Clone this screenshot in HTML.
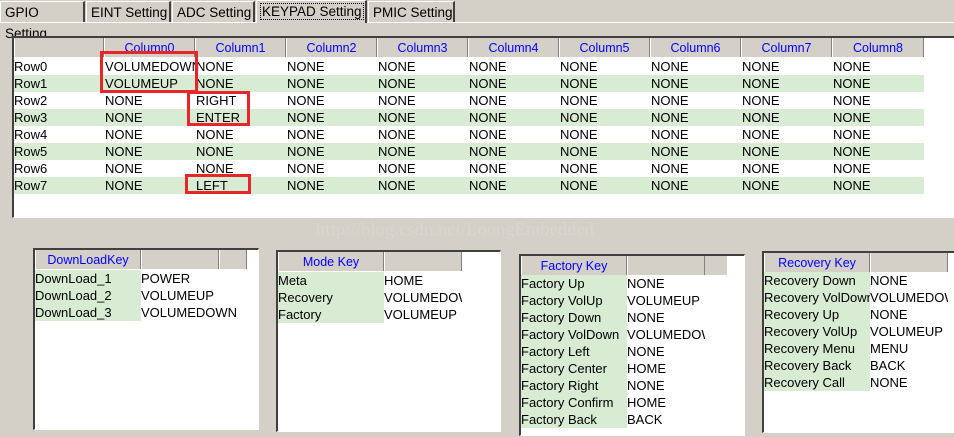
<!DOCTYPE html>
<html><head><meta charset="utf-8"><style>
*{margin:0;padding:0;box-sizing:border-box}
body{width:954px;height:437px;background:#d4d0c8;position:relative;overflow:hidden;font-family:"Liberation Sans",Arial,sans-serif;font-size:13px;color:#000}
.a{position:absolute}
.tab{position:absolute;top:1px;height:21px;border-left:1px solid #fff;border-top:1px solid #fff;border-right:2px solid #404040;font-size:13.5px;line-height:21px;padding-left:4px;color:#000}
.box{position:absolute;background:#fff;border-top:2px solid #404040;border-left:2px solid #404040;border-right:1px solid #fff;border-bottom:1px solid #fff}
.hd{position:absolute;height:19px;background:#d4d0c8;border-right:1px solid #808080;border-left:1px solid #fff;color:#0000ff;text-align:center;line-height:20px;font-size:12.5px}
.r{position:absolute;height:17px;line-height:18px;white-space:nowrap}
.r span{overflow:hidden}
.g{background:#d8ebd3}
.red{position:absolute;border:3px solid #e8262a}
</style></head><body>
<div class="a" style="left:0;top:22px;width:954px;height:1px;background:#fff"></div>
<div class="tab" style="left:0;width:85px">GPIO Setting</div>
<div class="tab" style="left:86px;width:85px">EINT Setting</div>
<div class="tab" style="left:172px;width:83px">ADC Setting</div>
<div class="tab" style="left:256px;top:0;height:23px;width:111px;background:#d4d0c8;border-bottom:none"><span style="outline:1px dotted #000;padding:0 1px">KEYPAD Setting</span></div>
<div class="tab" style="left:368px;width:87px">PMIC Setting</div>

<div class="box" style="left:12px;top:36px;width:950px;height:182px"></div>
<div class="hd" style="left:14px;top:38px;width:90px"></div>
<div class="hd" style="left:104px;top:38px;width:91px">Column0</div>
<div class="hd" style="left:195px;top:38px;width:91px">Column1</div>
<div class="hd" style="left:286px;top:38px;width:91px">Column2</div>
<div class="hd" style="left:377px;top:38px;width:91px">Column3</div>
<div class="hd" style="left:468px;top:38px;width:91px">Column4</div>
<div class="hd" style="left:559px;top:38px;width:91px">Column5</div>
<div class="hd" style="left:650px;top:38px;width:91px">Column6</div>
<div class="hd" style="left:741px;top:38px;width:91px">Column7</div>
<div class="hd" style="left:832px;top:38px;width:92px">Column8</div>

<div class="r" style="left:14px;top:58px;width:910px"><span class="a" style="left:0">Row0</span><span class="a" style="left:91px">VOLUMEDOWN</span><span class="a" style="left:182px;background:#fff">NONE</span><span class="a" style="left:273px">NONE</span><span class="a" style="left:364px">NONE</span><span class="a" style="left:455px">NONE</span><span class="a" style="left:546px">NONE</span><span class="a" style="left:637px">NONE</span><span class="a" style="left:728px">NONE</span><span class="a" style="left:819px">NONE</span></div>
<div class="r g" style="left:14px;top:75px;width:910px"><span class="a" style="left:0">Row1</span><span class="a" style="left:91px">VOLUMEUP</span><span class="a" style="left:182px">NONE</span><span class="a" style="left:273px">NONE</span><span class="a" style="left:364px">NONE</span><span class="a" style="left:455px">NONE</span><span class="a" style="left:546px">NONE</span><span class="a" style="left:637px">NONE</span><span class="a" style="left:728px">NONE</span><span class="a" style="left:819px">NONE</span></div>
<div class="r" style="left:14px;top:92px;width:910px"><span class="a" style="left:0">Row2</span><span class="a" style="left:91px">NONE</span><span class="a" style="left:182px">RIGHT</span><span class="a" style="left:273px">NONE</span><span class="a" style="left:364px">NONE</span><span class="a" style="left:455px">NONE</span><span class="a" style="left:546px">NONE</span><span class="a" style="left:637px">NONE</span><span class="a" style="left:728px">NONE</span><span class="a" style="left:819px">NONE</span></div>
<div class="r g" style="left:14px;top:109px;width:910px"><span class="a" style="left:0">Row3</span><span class="a" style="left:91px">NONE</span><span class="a" style="left:182px">ENTER</span><span class="a" style="left:273px">NONE</span><span class="a" style="left:364px">NONE</span><span class="a" style="left:455px">NONE</span><span class="a" style="left:546px">NONE</span><span class="a" style="left:637px">NONE</span><span class="a" style="left:728px">NONE</span><span class="a" style="left:819px">NONE</span></div>
<div class="r" style="left:14px;top:126px;width:910px"><span class="a" style="left:0">Row4</span><span class="a" style="left:91px">NONE</span><span class="a" style="left:182px">NONE</span><span class="a" style="left:273px">NONE</span><span class="a" style="left:364px">NONE</span><span class="a" style="left:455px">NONE</span><span class="a" style="left:546px">NONE</span><span class="a" style="left:637px">NONE</span><span class="a" style="left:728px">NONE</span><span class="a" style="left:819px">NONE</span></div>
<div class="r g" style="left:14px;top:143px;width:910px"><span class="a" style="left:0">Row5</span><span class="a" style="left:91px">NONE</span><span class="a" style="left:182px">NONE</span><span class="a" style="left:273px">NONE</span><span class="a" style="left:364px">NONE</span><span class="a" style="left:455px">NONE</span><span class="a" style="left:546px">NONE</span><span class="a" style="left:637px">NONE</span><span class="a" style="left:728px">NONE</span><span class="a" style="left:819px">NONE</span></div>
<div class="r" style="left:14px;top:160px;width:910px"><span class="a" style="left:0">Row6</span><span class="a" style="left:91px">NONE</span><span class="a" style="left:182px">NONE</span><span class="a" style="left:273px">NONE</span><span class="a" style="left:364px">NONE</span><span class="a" style="left:455px">NONE</span><span class="a" style="left:546px">NONE</span><span class="a" style="left:637px">NONE</span><span class="a" style="left:728px">NONE</span><span class="a" style="left:819px">NONE</span></div>
<div class="r g" style="left:14px;top:177px;width:910px"><span class="a" style="left:0">Row7</span><span class="a" style="left:91px">NONE</span><span class="a" style="left:182px">LEFT</span><span class="a" style="left:273px">NONE</span><span class="a" style="left:364px">NONE</span><span class="a" style="left:455px">NONE</span><span class="a" style="left:546px">NONE</span><span class="a" style="left:637px">NONE</span><span class="a" style="left:728px">NONE</span><span class="a" style="left:819px">NONE</span></div>
<div class="red" style="left:100px;top:51px;width:98px;height:42px"></div>
<div class="red" style="left:187px;top:91px;width:63px;height:35px"></div>
<div class="red" style="left:185px;top:174px;width:66px;height:20px"></div>

<div class="a" style="left:316px;top:218px;font-family:'Liberation Serif',serif;font-size:18px;color:#d9d6cf;line-height:22px;letter-spacing:0.3px">http://blog.csdn.net/LoongEmbedded</div>

<!-- DownLoadKey -->
<div class="box" style="left:33px;top:248px;width:226px;height:182px"></div>
<div class="hd" style="left:35px;top:250px;width:106px">DownLoadKey</div>
<div class="hd" style="left:141px;top:250px;width:78px"></div>
<div class="hd" style="left:219px;top:250px;width:28px"></div>
<div class="r" style="left:35px;top:270px"><span class="a g" style="left:0;width:106px;height:17px">DownLoad_1</span><span class="a" style="left:106px">POWER</span></div>
<div class="r" style="left:35px;top:287px"><span class="a g" style="left:0;width:106px;height:17px">DownLoad_2</span><span class="a" style="left:106px">VOLUMEUP</span></div>
<div class="r" style="left:35px;top:304px"><span class="a g" style="left:0;width:106px;height:17px">DownLoad_3</span><span class="a" style="left:106px">VOLUMEDOWN</span></div>

<!-- Mode Key -->
<div class="box" style="left:276px;top:250px;width:225px;height:182px"></div>
<div class="hd" style="left:278px;top:252px;width:106px">Mode Key</div>
<div class="hd" style="left:384px;top:252px;width:78px"></div>
<div class="r" style="left:278px;top:272px"><span class="a g" style="left:0;width:106px;height:17px">Meta</span><span class="a" style="left:106px">HOME</span></div>
<div class="r" style="left:278px;top:289px"><span class="a g" style="left:0;width:106px;height:17px">Recovery</span><span class="a" style="left:106px;width:78px">VOLUMEDOWN</span></div>
<div class="r" style="left:278px;top:306px"><span class="a g" style="left:0;width:106px;height:17px">Factory</span><span class="a" style="left:106px">VOLUMEUP</span></div>

<!-- Factory Key -->
<div class="box" style="left:519px;top:254px;width:226px;height:182px"></div>
<div class="hd" style="left:521px;top:256px;width:106px">Factory Key</div>
<div class="hd" style="left:627px;top:256px;width:78px"></div>
<div class="a" style="left:705px;top:256px;width:22px;height:19px;background:#d4d0c8"></div>
<div class="r" style="left:521px;top:275px"><span class="a g" style="left:0;width:106px;height:17px">Factory Up</span><span class="a" style="left:106px">NONE</span></div>
<div class="r" style="left:521px;top:292px"><span class="a g" style="left:0;width:106px;height:17px">Factory VolUp</span><span class="a" style="left:106px">VOLUMEUP</span></div>
<div class="r" style="left:521px;top:309px"><span class="a g" style="left:0;width:106px;height:17px">Factory Down</span><span class="a" style="left:106px">NONE</span></div>
<div class="r" style="left:521px;top:326px"><span class="a g" style="left:0;width:106px;height:17px">Factory VolDown</span><span class="a" style="left:106px;width:78px">VOLUMEDOWN</span></div>
<div class="r" style="left:521px;top:343px"><span class="a g" style="left:0;width:106px;height:17px">Factory Left</span><span class="a" style="left:106px">NONE</span></div>
<div class="r" style="left:521px;top:360px"><span class="a g" style="left:0;width:106px;height:17px">Factory Center</span><span class="a" style="left:106px">HOME</span></div>
<div class="r" style="left:521px;top:377px"><span class="a g" style="left:0;width:106px;height:17px">Factory Right</span><span class="a" style="left:106px">NONE</span></div>
<div class="r" style="left:521px;top:394px"><span class="a g" style="left:0;width:106px;height:17px">Factory Confirm</span><span class="a" style="left:106px">HOME</span></div>
<div class="r" style="left:521px;top:411px"><span class="a g" style="left:0;width:106px;height:17px">Factory Back</span><span class="a" style="left:106px">BACK</span></div>

<!-- Recovery Key -->
<div class="box" style="left:762px;top:251px;width:200px;height:182px"></div>
<div class="hd" style="left:764px;top:253px;width:106px">Recovery Key</div>
<div class="hd" style="left:870px;top:253px;width:78px"></div>
<div class="r" style="left:764px;top:272px"><span class="a g" style="left:0;width:106px;height:17px">Recovery Down</span><span class="a" style="left:106px">NONE</span></div>
<div class="r" style="left:764px;top:289px"><span class="a g" style="left:0;width:106px;height:17px">Recovery VolDown</span><span class="a" style="left:106px;width:78px">VOLUMEDOWN</span></div>
<div class="r" style="left:764px;top:306px"><span class="a g" style="left:0;width:106px;height:17px">Recovery Up</span><span class="a" style="left:106px">NONE</span></div>
<div class="r" style="left:764px;top:323px"><span class="a g" style="left:0;width:106px;height:17px">Recovery VolUp</span><span class="a" style="left:106px">VOLUMEUP</span></div>
<div class="r" style="left:764px;top:340px"><span class="a g" style="left:0;width:106px;height:17px">Recovery Menu</span><span class="a" style="left:106px">MENU</span></div>
<div class="r" style="left:764px;top:357px"><span class="a g" style="left:0;width:106px;height:17px">Recovery Back</span><span class="a" style="left:106px">BACK</span></div>
<div class="r" style="left:764px;top:374px"><span class="a g" style="left:0;width:106px;height:17px">Recovery Call</span><span class="a" style="left:106px">NONE</span></div>
</body></html>
